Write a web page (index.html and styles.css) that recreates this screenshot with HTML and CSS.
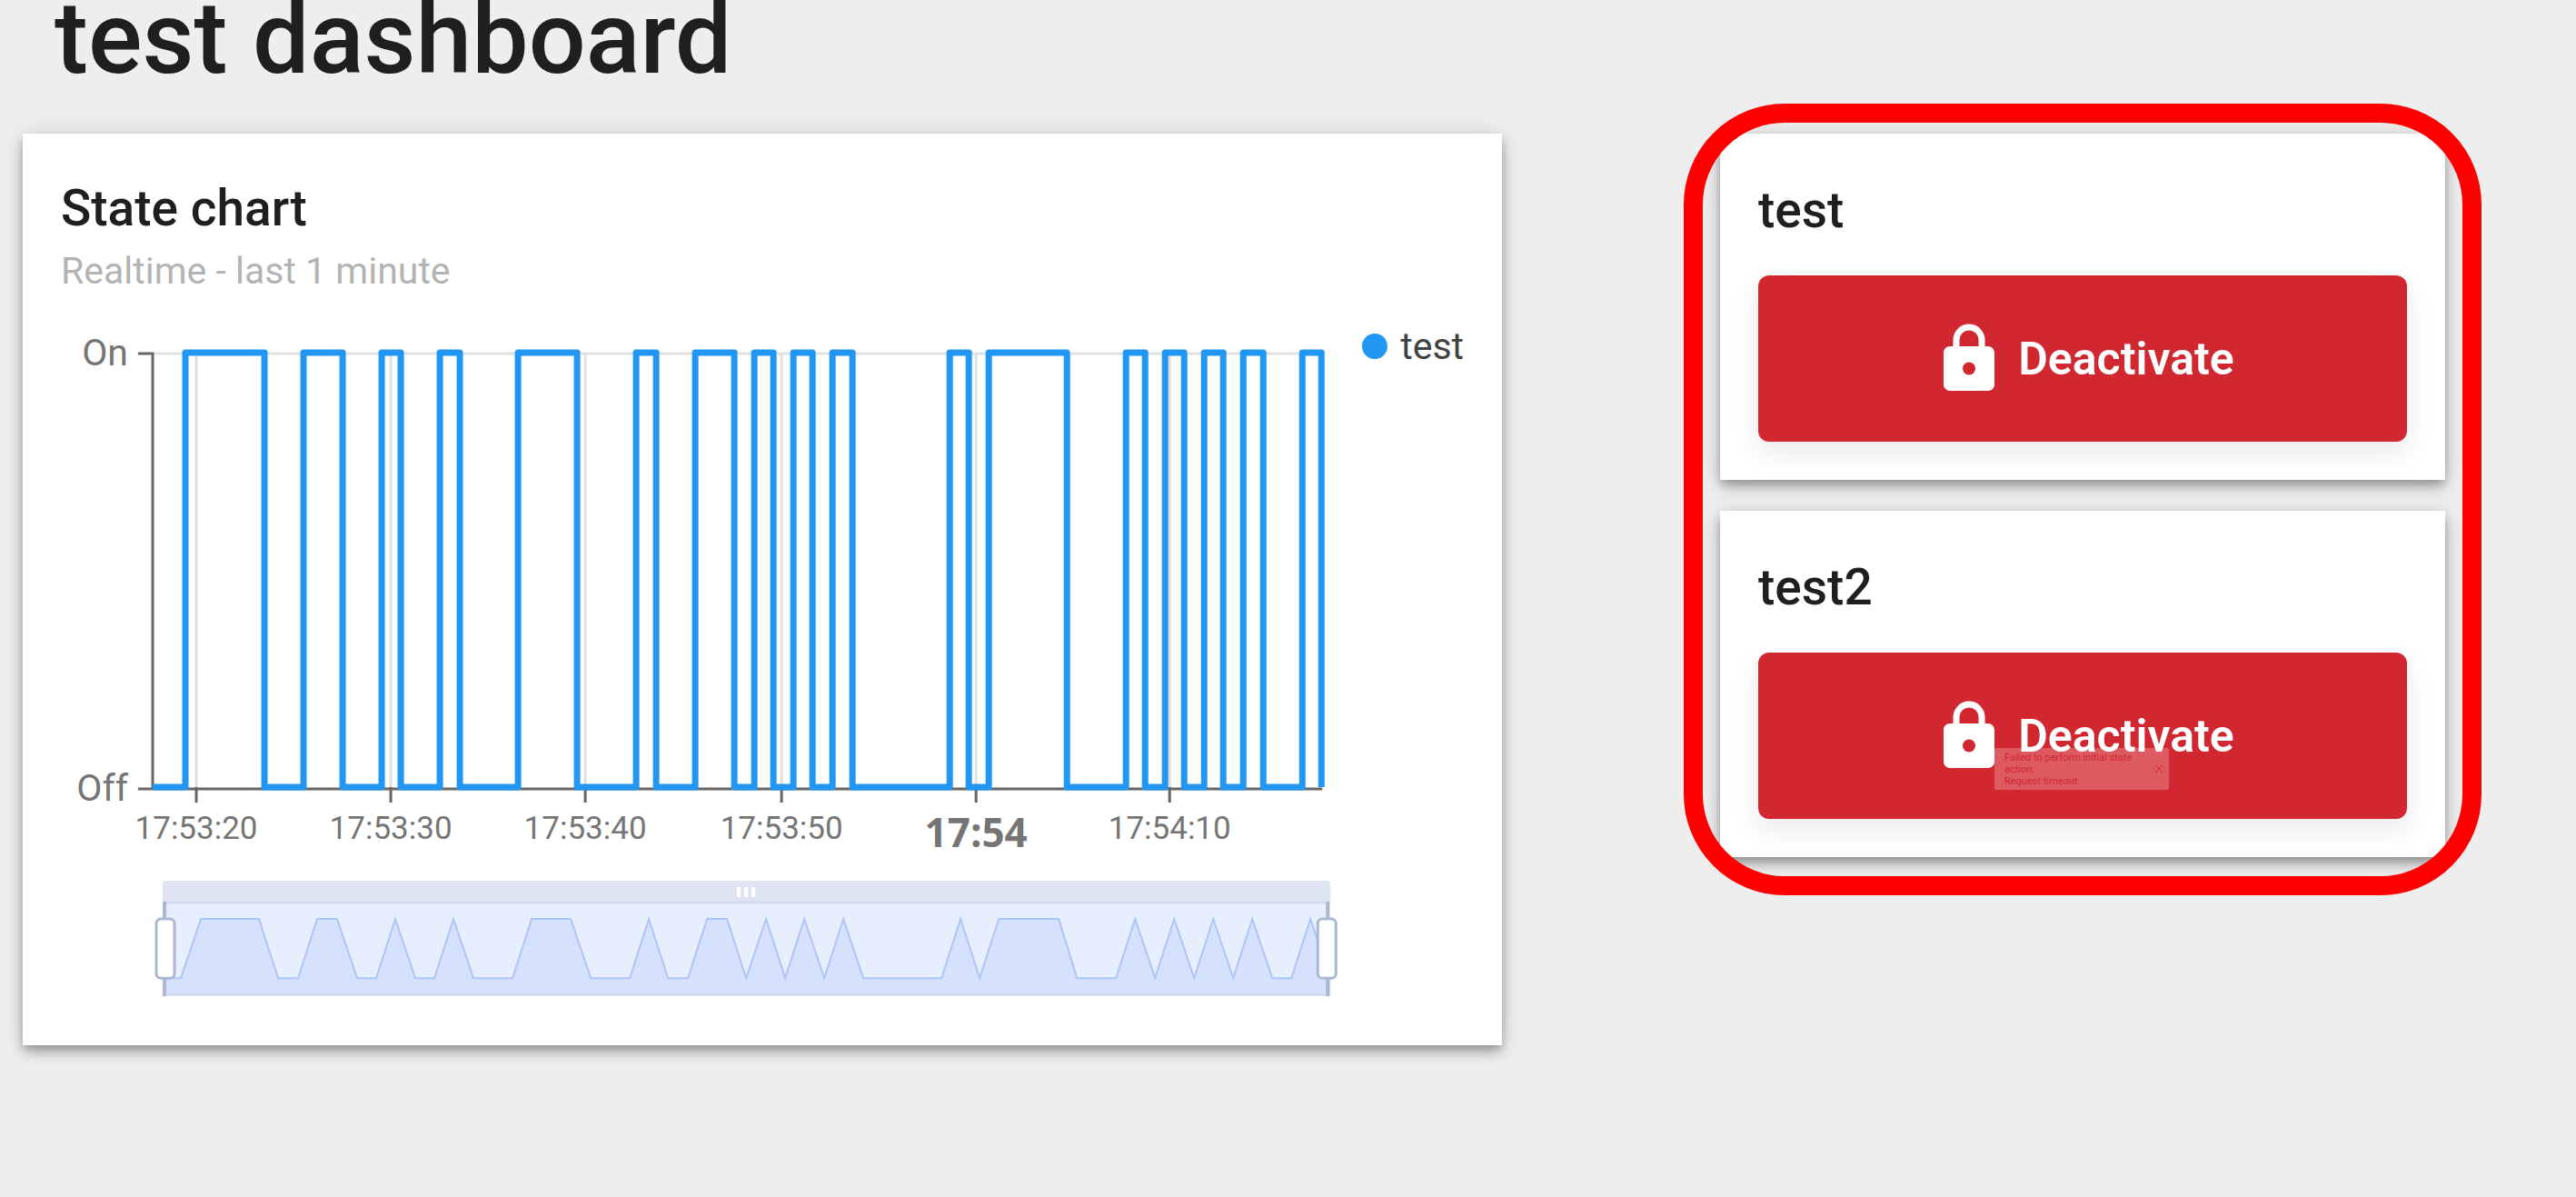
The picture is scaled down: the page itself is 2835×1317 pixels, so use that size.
FILE: index.html
```html
<!DOCTYPE html>
<html lang="en">
<head>
<meta charset="utf-8">
<meta name="viewport" content="width=device-width, initial-scale=1">
<title>test dashboard</title>
<link rel="stylesheet" href="styles.css">
</head>
<body>
<header class="page-header">
  <h1 class="page-title">test dashboard</h1>
</header>
<main class="dashboard">
  <section class="card">
    <h2 class="card-title">State chart</h2>
    <p class="card-subtitle">Realtime - last 1 minute</p>
    <div class="chart">
      <svg class="chart-plot" viewBox="67 340 1405 768" role="img" aria-label="State of test over the last minute">
        <g class="grid-lines">
          <path d="M168 389H1455M216 389V868M430 389V868M644 389V868M860 389V868M1074 389V868M1287 389V868"/>
        </g>
        <g class="axis-lines">
          <path d="M152 389H169M168 388V868M152 868H1455M216 866V883M430 866V883M644 866V883M860 866V883M1074 866V883M1287 866V883"/>
        </g>
        <path class="series" d="M168 866H204V388H291V866H334V388H377V866H420V388H441V866H484V388H506V866H570V388H635V866H700V388H722V866H765V388H808V866H830V388H851V866H873V388H894V866H916V388H938V866H1045V388H1066V866H1088V388H1174V866H1239V388H1260V866H1282V388H1303V866H1325V388H1346V866H1368V388H1390V866H1433V388H1454V866"/>
        <g class="y-labels">
          <text x="141" y="402">On</text>
          <text x="141" y="881">Off</text>
        </g>
        <g class="x-labels">
          <text x="216" y="923">17:53:20</text>
          <text x="430" y="923">17:53:30</text>
          <text x="644" y="923">17:53:40</text>
          <text x="860" y="923">17:53:50</text>
          <text class="x-label-major" x="1074" y="932">17:54</text>
          <text x="1287" y="923">17:54:10</text>
        </g>
        <g class="zoom-slider">
          <path class="zoom-bar" d="M179 993V973Q179 969 183 969H1460Q1464 969 1464 973V993Z"/>
          <rect class="zoom-window" x="180" y="993" width="1284" height="102"/>
          <path class="zoom-area" d="M181 1095V1076H199L221 1011H285L306 1076H328L349 1011H371L393 1076H414L435 1011L457 1076H478L499 1011L521 1076H564L585 1011H628L650 1076H693L714 1011L735 1076H757L778 1011H800L821 1076L843 1011L864 1076L885 1011L907 1076L928 1011L950 1076H1036L1057 1011L1078 1076L1099 1011H1165L1185 1076H1228L1249 1011L1271 1076L1292 1011L1314 1076L1335 1011L1357 1076L1378 1011L1400 1076H1421L1442 1011L1464 1076V1095Z"/>
          <path class="zoom-line" d="M181 1076H199L221 1011H285L306 1076H328L349 1011H371L393 1076H414L435 1011L457 1076H478L499 1011L521 1076H564L585 1011H628L650 1076H693L714 1011L735 1076H757L778 1011H800L821 1076L843 1011L864 1076L885 1011L907 1076L928 1011L950 1076H1036L1057 1011L1078 1076L1099 1011H1165L1185 1076H1228L1249 1011L1271 1076L1292 1011L1314 1076L1335 1011L1357 1076L1378 1011L1400 1076H1421L1442 1011L1464 1076"/>
          <path class="zoom-edge" d="M181 993H1462M181 1094H1462"/>
          <path class="zoom-grip" d="M813 976V987M821 976V987M829 976V987"/>
          <path class="zoom-stem" d="M181 992V1096M1461 992V1096"/>
          <rect class="zoom-handle" x="172" y="1011" width="20" height="65" rx="5"/>
          <rect class="zoom-handle" x="1450" y="1011" width="20" height="65" rx="5"/>
        </g>
      </svg>
      <div class="legend"><span class="legend-dot"></span>test</div>
    </div>
  </section>

  <div class="controls">
    <section class="card">
      <h2 class="card-title control-title">test</h2>
      <button class="action" type="button">
        <svg class="action-icon" viewBox="0 0 24 24" aria-hidden="true"><path d="M12,17A2,2 0 0,0 14,15C14,13.89 13.1,13 12,13A2,2 0 0,0 10,15A2,2 0 0,0 12,17M18,8A2,2 0 0,1 20,10V20A2,2 0 0,1 18,22H6A2,2 0 0,1 4,20V10C4,8.89 4.9,8 6,8H7V6A5,5 0 0,1 12,1A5,5 0 0,1 17,6V8H18M12,3A3,3 0 0,0 9,6V8H15V6A3,3 0 0,0 12,3Z"/></svg>
        <span class="action-label">Deactivate</span>
      </button>
    </section>
    <section class="card">
      <h2 class="card-title control-title">test2</h2>
      <button class="action" type="button">
        <svg class="action-icon" viewBox="0 0 24 24" aria-hidden="true"><path d="M12,17A2,2 0 0,0 14,15C14,13.89 13.1,13 12,13A2,2 0 0,0 10,15A2,2 0 0,0 12,17M18,8A2,2 0 0,1 20,10V20A2,2 0 0,1 18,22H6A2,2 0 0,1 4,20V10C4,8.89 4.9,8 6,8H7V6A5,5 0 0,1 12,1A5,5 0 0,1 17,6V8H18M12,3A3,3 0 0,0 9,6V8H15V6A3,3 0 0,0 12,3Z"/></svg>
        <span class="action-label">Deactivate</span>
        <span class="toast">
          <span class="toast-text">Failed to perform initial state action:<br>Request timeout</span>
          <svg class="toast-close" viewBox="0 0 10 10" aria-hidden="true"><path d="M1 1L9 9M9 1L1 9"/></svg>
        </span>
      </button>
    </section>
    <div class="highlight"></div>
  </div>
</main>
</body>
</html>
```
FILE: styles.css
```css
* {
  box-sizing: border-box;
}

body {
  margin: 0;
  background: #eeeeee;
  color: #1f1f1f;
  font-family: Roboto, "Liberation Sans", sans-serif;
}

.page-header {
  padding: 0 60px 63px;
}

.page-title {
  margin: 0;
  font-size: 111px;
  font-weight: 500;
  line-height: 84px;
}

.dashboard {
  display: grid;
  grid-template-columns: 1628fr 798fr;
  column-gap: 240px;
  align-items: start;
  padding: 0 144px 42px 25px;
}

.card {
  padding: 42px;
  background: #ffffff;
  box-shadow:
    0 6px 10px -2px rgba(0, 0, 0, 0.24),
    0 8px 14px rgba(0, 0, 0, 0.16),
    0 2px 24px rgba(0, 0, 0, 0.12);
}

.card-title {
  margin: 0;
  font-size: 55px;
  font-weight: 500;
  line-height: 80px;
}

.card-subtitle {
  margin: 0 0 13px;
  color: #b3b3b3;
  font-size: 41px;
  line-height: 58px;
}

/* Chart */

.chart {
  display: flex;
  align-items: flex-start;
  gap: 27px;
}

.chart-plot {
  display: block;
  flex: 1;
  min-width: 0;
}

.grid-lines path {
  fill: none;
  stroke: #e0e0e0;
  stroke-width: 3;
}

.axis-lines path {
  fill: none;
  stroke: #666666;
  stroke-width: 3;
}

.series {
  fill: none;
  stroke: #2196f3;
  stroke-width: 7;
  stroke-linejoin: round;
}

.y-labels {
  fill: #757575;
  font-size: 41px;
  text-anchor: end;
}

.x-labels {
  fill: #757575;
  font-size: 35px;
  text-anchor: middle;
}

.x-label-major {
  font-family: "Open Sans", "Noto Sans", sans-serif;
  font-size: 44px;
  font-weight: 700;
}

.zoom-bar {
  fill: #dee4f2;
}

.zoom-window {
  fill: #e7eefe;
}

.zoom-area {
  fill: #d5e1fd;
}

.zoom-line {
  fill: none;
  stroke: #afc5f8;
  stroke-width: 2;
}

.zoom-edge {
  stroke: #d2dbee;
  stroke-width: 3;
}

.zoom-grip {
  stroke: #ffffff;
  stroke-width: 4;
}

.zoom-stem {
  stroke: #acb8d1;
  stroke-width: 4;
}

.zoom-handle {
  fill: #ffffff;
  stroke: #acb8d1;
  stroke-width: 3;
}

.legend {
  display: flex;
  align-items: center;
  gap: 14px;
  padding-top: 16px;
  color: #424242;
  font-size: 41px;
  line-height: 50px;
}

.legend-dot {
  width: 28px;
  height: 28px;
  border-radius: 50%;
  background: #2196f3;
}

/* Controls */

.controls {
  position: relative;
  display: grid;
  gap: 34px;
}

.control-title {
  margin-bottom: 30px;
  line-height: 84px;
}

.action {
  position: relative;
  display: flex;
  align-items: center;
  justify-content: center;
  gap: 12px;
  width: 100%;
  height: 183px;
  padding: 0 42px;
  border: 0;
  border-radius: 12px;
  background: #d12730;
  color: #ffffff;
  font: 600 50px/56px Roboto, "Liberation Sans", sans-serif;
  box-shadow: 0 12px 32px rgba(0, 0, 0, 0.09);
  cursor: pointer;
}

.action-icon {
  width: 84px;
  height: 84px;
  fill: currentColor;
}

.action-label {
  position: relative;
  z-index: 1;
}

.toast {
  position: absolute;
  top: 105px;
  left: 260px;
  display: flex;
  align-items: center;
  justify-content: space-between;
  width: 192px;
  height: 46px;
  padding: 0 6px 0 11px;
  border-radius: 2px;
  background: #dc5a60;
  color: #d12730;
  font-size: 11px;
  font-weight: 400;
  line-height: 13px;
  text-align: left;
}

.toast-text {
  width: 150px;
}

.toast-close {
  width: 10px;
  height: 10px;
  fill: none;
  stroke: currentColor;
}

.highlight {
  position: absolute;
  inset: -33px -40px -42px;
  border: 21px solid #ff0000;
  border-radius: 111px;
  pointer-events: none;
}
```
